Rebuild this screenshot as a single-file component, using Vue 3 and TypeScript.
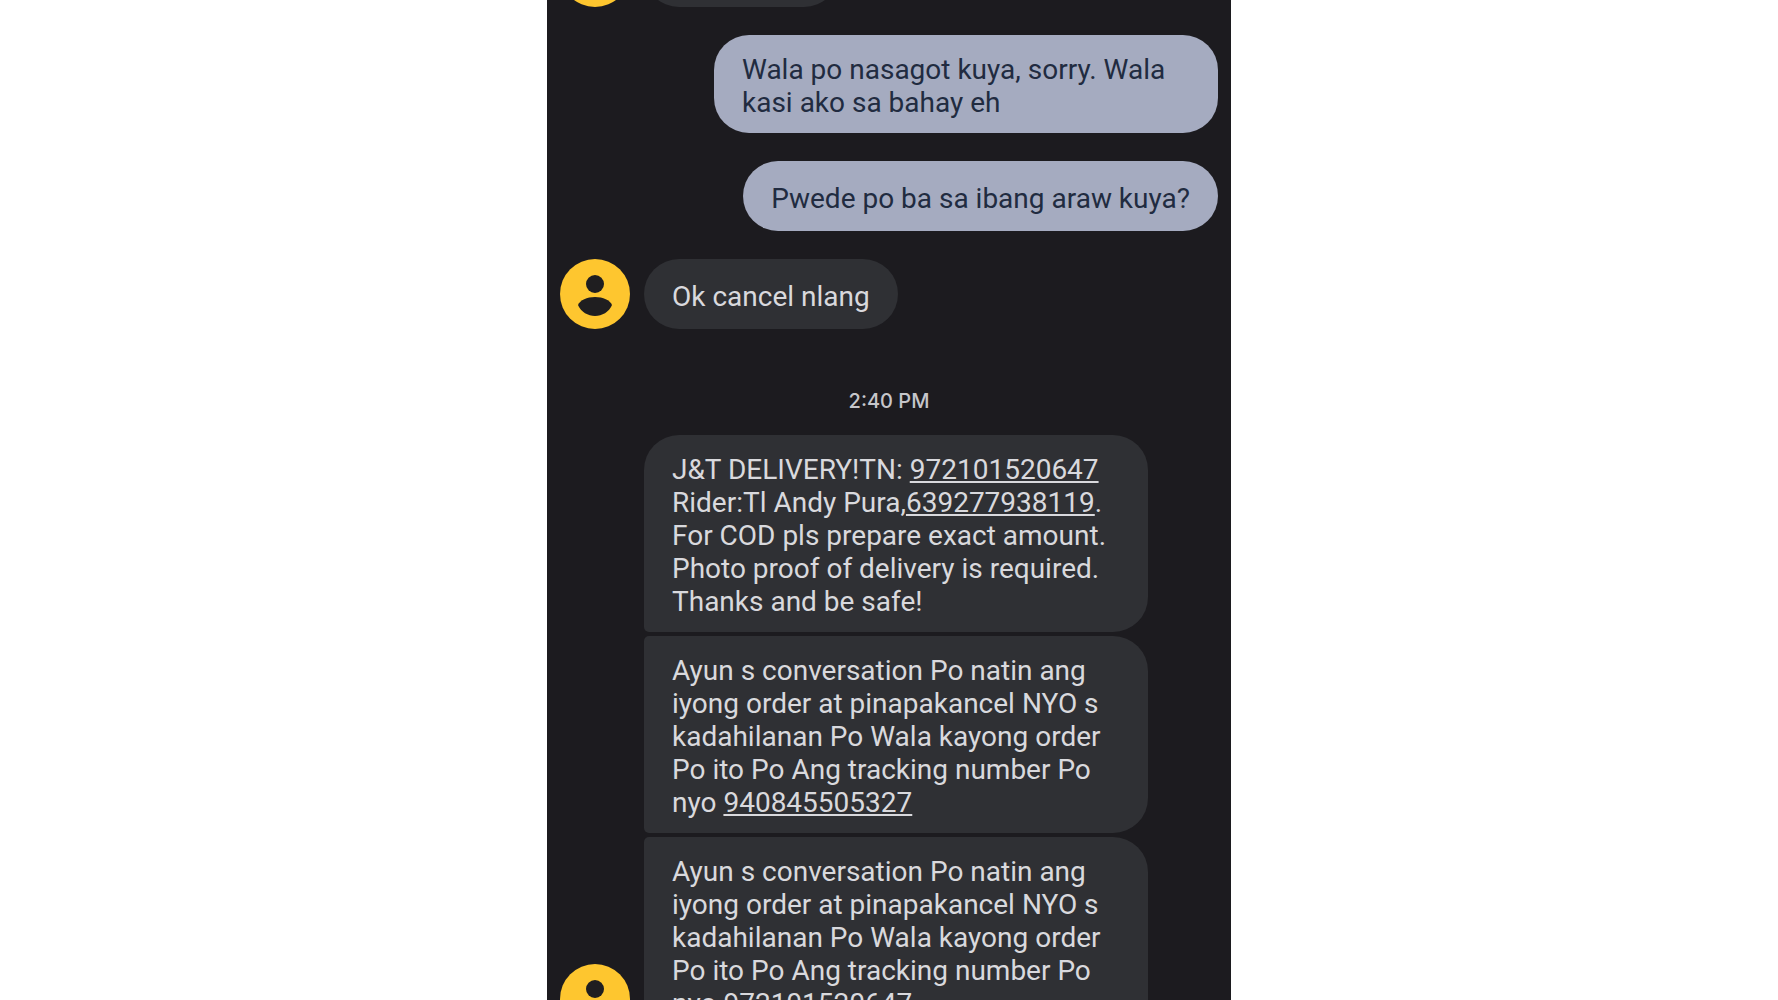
<script setup lang="ts">
interface Part {
  text: string
  href?: string
}

interface Message {
  id: number
  side: 'in' | 'out'
  parts: Part[]
  avatar?: boolean
  stack?: 'first' | 'middle'
  time?: string
}

const order = 'Ayun s conversation Po natin ang iyong order at pinapakancel NYO s kadahilanan Po Wala kayong order Po ito Po Ang tracking number Po nyo '

const messages: Message[] = [
  { id: 1, side: 'in', avatar: true, parts: [] },
  { id: 2, side: 'out', parts: [{ text: 'Wala po nasagot kuya, sorry. Wala kasi ako sa bahay eh' }] },
  { id: 3, side: 'out', parts: [{ text: 'Pwede po ba sa ibang araw kuya?' }] },
  { id: 4, side: 'in', avatar: true, parts: [{ text: 'Ok cancel nlang' }] },
  {
    id: 5,
    side: 'in',
    stack: 'first',
    time: '2:40 PM',
    parts: [
      { text: 'J&T DELIVERY!TN: ' },
      { text: '972101520647', href: 'tel:972101520647' },
      { text: ' Rider:Tl Andy Pura,' },
      { text: '639277938119', href: 'tel:639277938119' },
      { text: '. For COD pls prepare exact amount. Photo proof of delivery is required. Thanks and be safe!' },
    ],
  },
  {
    id: 6,
    side: 'in',
    stack: 'middle',
    parts: [{ text: order }, { text: '940845505327', href: 'tel:940845505327' }],
  },
  {
    id: 7,
    side: 'in',
    stack: 'middle',
    avatar: true,
    parts: [{ text: order }, { text: '972101520647', href: 'tel:972101520647' }],
  },
]
</script>

<template>
  <main class="screen">
    <section class="thread">
      <template v-for="m in messages" :key="m.id">
        <time v-if="m.time" class="time">{{ m.time }}</time>
        <article class="row" :class="[m.side, m.stack]">
          <div v-if="m.side === 'in'" class="slot">
            <svg v-if="m.avatar" class="avatar" viewBox="0 0 70 70" aria-hidden="true">
              <circle cx="35" cy="35" r="35" fill="#fec62f" />
              <circle cx="35" cy="25" r="9" fill="#1f1e20" />
              <path d="M18 46C20 41 27 38 35 38S50 41 52 46C49 53 42 57 35 57S21 53 18 46Z" fill="#1f1e20" />
            </svg>
          </div>
          <div class="bubble" :class="{ blank: !m.parts.length }">
            <p v-if="m.parts.length" class="text"><template v-for="(p, i) in m.parts" :key="i"><a v-if="p.href" :href="p.href">{{ p.text }}</a><template v-else>{{ p.text }}</template></template></p>
          </div>
        </article>
      </template>
    </section>
  </main>
</template>

<style>
body {
  margin: 0;
  background: #ffffff;
}
</style>

<style scoped>
.screen {
  box-sizing: border-box;
  height: 100vh;
  max-width: 684px;
  margin: 0 auto;
  overflow: hidden;
  background: #1c1b1f;
  font-family: Roboto, 'Liberation Sans', sans-serif;
}

.thread {
  display: flex;
  flex-direction: column;
  margin-top: -63px;
  padding: 0 13px;
}

.row {
  display: flex;
  align-items: flex-end;
  margin-bottom: 28px;
}

.row.out {
  justify-content: flex-end;
}

.row.first,
.row.middle {
  margin-bottom: 4px;
}

.slot {
  flex: none;
  width: 70px;
  margin-right: 14px;
}

.avatar {
  display: block;
  width: 70px;
  height: 70px;
}

.bubble {
  box-sizing: border-box;
  display: flex;
  align-items: center;
  min-height: 70px;
  max-width: 504px;
  padding: 18px 28px 14px;
  border-radius: 35px;
  background: #2f3034;
  color: #d9d9dd;
}

.bubble.blank {
  width: 195px;
}

.out .bubble {
  background: #a5abc0;
  color: #212b40;
}

.first .bubble {
  border-bottom-left-radius: 5px;
}

.middle .bubble {
  border-top-left-radius: 5px;
  border-bottom-left-radius: 5px;
}

.text {
  margin: 0;
  font-size: 28px;
  line-height: 33px;
}

.text a {
  color: inherit;
  text-decoration: underline;
  text-decoration-thickness: 2px;
  text-decoration-skip-ink: none;
  text-underline-offset: 2px;
}

.time {
  margin: 32px 0 22px;
  color: #c6c6ca;
  font-family: Inter, Roboto, sans-serif;
  font-size: 20px;
  font-weight: 500;
  line-height: 24px;
  text-align: center;
}
</style>
